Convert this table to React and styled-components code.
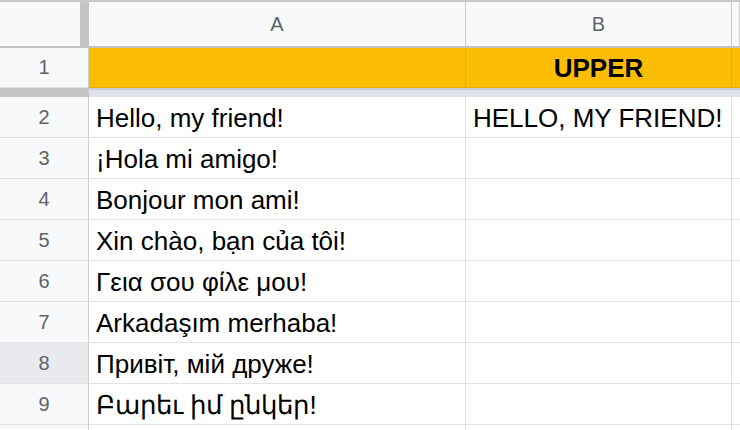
import React from "react";
import styled, { createGlobalStyle } from "styled-components";

const Global = createGlobalStyle`
  html, body { margin: 0; padding: 0; background: #ffffff; overflow: hidden; }
  body { font-family: "Liberation Sans", Arial, sans-serif; }
`;

const COLS = "89px 377px 266px 1fr";

const Sheet = styled.div`
  width: 740px;
  height: 430px;
  overflow: hidden;
  display: flex;
  flex-direction: column;
  font-family: "Liberation Sans", Arial, sans-serif;
`;

const HeaderRow = styled.div`
  display: grid;
  grid-template-columns: ${COLS};
  height: 48px;
  flex: none;
  box-sizing: border-box;
  border-top: 2px solid #c7c7c7;
  background: #f8f9fa;
`;

const Corner = styled.div`
  box-sizing: border-box;
  background: #f8f9fa;
  border-right: 9px solid #c4c4c4;
  border-bottom: 2px solid #c4c4c4;
`;

const ColHeader = styled.div`
  box-sizing: border-box;
  display: flex;
  align-items: center;
  justify-content: center;
  color: #5f6368;
  font-size: 20px;
  background: #f8f9fa;
  border-right: 1px solid #c9cbcd;
  border-bottom: 2px solid #c4c4c4;
  padding-top: 1px;
`;

const Row = styled.div`
  display: grid;
  grid-template-columns: ${COLS};
  height: ${(p) => p.$h}px;
  flex: none;
`;

const RowHeader = styled.div`
  box-sizing: border-box;
  display: flex;
  align-items: center;
  justify-content: center;
  color: #5f6368;
  font-size: 20px;
  background: ${(p) => (p.$active ? "#e8eaed" : "#f8f9fa")};
  border-right: 1px solid #c9cbcd;
  border-bottom: 1px solid #e1e2e3;
`;

const Cell = styled.div`
  box-sizing: border-box;
  display: flex;
  align-items: center;
  justify-content: ${(p) => (p.$center ? "center" : "flex-start")};
  padding: 2px 7px 0 7px;
  font-size: 26px;
  font-weight: ${(p) => (p.$bold ? 700 : 400)};
  color: #000000;
  white-space: nowrap;
  overflow: hidden;
  background: ${(p) => (p.$fill ? "#fbbc04" : "#ffffff")};
  border-right: 1px solid ${(p) => (p.$fill ? "#e6ab05" : "#e1e2e3")};
  border-bottom: 1px solid ${(p) => (p.$fill ? "#e6ab05" : "#e1e2e3")};
`;

const FreezeRow = styled.div`
  display: grid;
  grid-template-columns: ${COLS};
  height: 9px;
  flex: none;
`;

const FreezeHandle = styled.div`
  background: #c4c4c4;
`;

const FreezeBand = styled.div`
  box-sizing: border-box;
  background: #dfe2ea;
  border-top: 2px solid #c9cbd2;
`;

const rows = [
  ["Hello, my friend!", "HELLO, MY FRIEND!"],
  ["¡Hola mi amigo!", ""],
  ["Bonjour mon ami!", ""],
  ["Xin chào, bạn của tôi!", ""],
  ["Γεια σου φίλε μου!", ""],
  ["Arkadaşım merhaba!", ""],
  ["Привіт, мій друже!", ""],
  ["Բարեւ իմ ընկեր!", ""],
];

export default function App() {
  return (
    <>
      <Global />
      <Sheet>
        <HeaderRow>
          <Corner />
          <ColHeader>A</ColHeader>
          <ColHeader>B</ColHeader>
          <ColHeader />
        </HeaderRow>
        <Row $h={40}>
          <RowHeader>1</RowHeader>
          <Cell $fill />
          <Cell $fill $bold $center>UPPER</Cell>
          <Cell $fill />
        </Row>
        <FreezeRow>
          <FreezeHandle />
          <FreezeBand />
          <FreezeBand />
          <FreezeBand />
        </FreezeRow>
        {rows.map(([a, b], i) => (
          <Row key={i} $h={41}>
            <RowHeader $active={i + 2 === 8}>{i + 2}</RowHeader>
            <Cell>{a}</Cell>
            <Cell>{b}</Cell>
            <Cell />
          </Row>
        ))}
        <Row $h={41}>
          <RowHeader />
          <Cell />
          <Cell />
          <Cell />
        </Row>
      </Sheet>
    </>
  );
}
